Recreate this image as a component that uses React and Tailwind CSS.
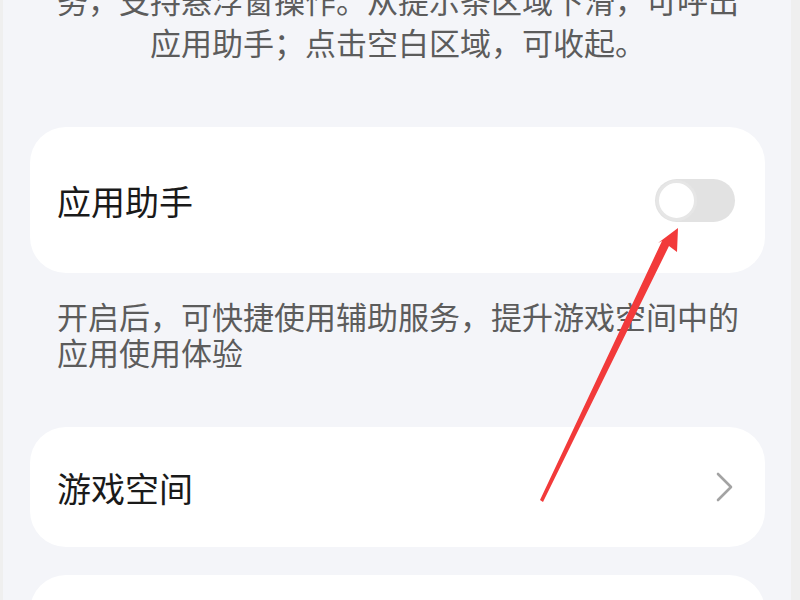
import React from 'react';

const font = { fontFamily: '"Noto Sans CJK SC", "Noto Sans", sans-serif' };

const Toggle = () => (
    <div className="w-[80px] h-[43px] rounded-full bg-[#e2e2e2] flex items-center pl-[1px]">
        <div className="w-[41px] h-[41px] rounded-full bg-white border-[3px] border-[#e6e6e6]"></div>
    </div>
);

const Arrow = () => (
    <svg className="absolute left-0 top-0 pointer-events-none" width="800" height="600" viewBox="0 0 800 600">
        <polygon
            points="678,228 677,252 669,246 543,502 540,500 662,241 658,243"
            fill="#f23a3a"
        />
    </svg>
);

export default function App() {
    return (
        <div className="relative w-[800px] h-[600px] overflow-hidden bg-[#efefef] pl-[3px] pr-[9px]" style={font}>
            <div className="h-full bg-[#f4f5f9] flex flex-col">
                <p className="shrink-0 mt-[-21px] text-center text-[31px] leading-[42px] text-[#5c5c5c] pl-[2px] whitespace-nowrap">
                    务，支持悬浮窗操作。从提示条区域下滑，可呼出
                    <br />
                    应用助手；点击空白区域，可收起。
                </p>

                <div className="shrink-0 mt-[64px] ml-[27px] mr-[26px] h-[146px] rounded-[36px] bg-white flex items-center justify-between pl-[27px] pr-[30px]">
                    <span className="text-[34px] text-[#1a1a1a]">应用助手</span>
                    <Toggle />
                </div>

                <p className="shrink-0 mt-[25px] pl-[54px] text-[31px] leading-[36px] text-[#5c5c5c] whitespace-nowrap">
                    开启后，可快捷使用辅助服务，提升游戏空间中的
                    <br />
                    应用使用体验
                </p>

                <div className="shrink-0 mt-[57px] ml-[27px] mr-[26px] h-[120px] rounded-[36px] bg-white flex items-center justify-between pl-[27px] pr-[30px]">
                    <span className="text-[34px] text-[#1a1a1a]">游戏空间</span>
                    <svg width="18" height="30" viewBox="0 0 18 30" className="mr-[1px]">
                        <path d="M2 2 L15 15 L2 28" fill="none" stroke="#a3a3a3" strokeWidth="2.6" strokeLinecap="round" strokeLinejoin="round" />
                    </svg>
                </div>

                <div className="shrink-0 mt-[28px] ml-[27px] mr-[26px] h-[120px] rounded-[36px] bg-white"></div>
            </div>
            <Arrow />
        </div>
    );
}
